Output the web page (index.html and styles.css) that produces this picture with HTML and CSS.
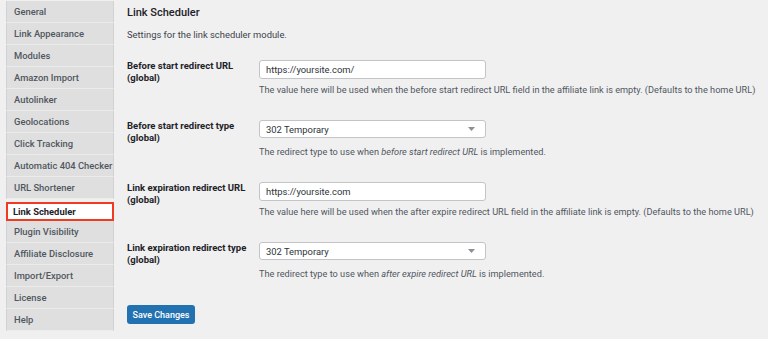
FILE: index.html
```html
<!DOCTYPE html>
<html lang="en">
<head>
    <meta charset="UTF-8">
    <meta name="viewport" content="width=device-width, initial-scale=1.0">
    <title>Link Scheduler Settings</title>
    <link rel="stylesheet" href="styles.css">
</head>
<body>
    <div class="settings-container">
        <ul class="sidebar">
            <li>General</li>
            <li>Link Appearance</li>
            <li>Modules</li>
            <li>Amazon Import</li>
            <li>Autolinker</li>
            <li>Geolocations</li>
            <li>Click Tracking</li>
            <li>Automatic 404 Checker</li>
            <li>URL Shortener</li>
            <li class="active">Link Scheduler</li>
            <li>Plugin Visibility</li>
            <li>Affiliate Disclosure</li>
            <li>Import/Export</li>
            <li>License</li>
            <li>Help</li>
        </ul>
        <div class="content">
            <h2>Link Scheduler</h2>
            <p class="intro">Settings for the link scheduler module.</p>
            <form class="settings-form">
                <label class="field-label" for="before-url">Before start redirect URL (global)</label>
                <div class="field">
                    <input type="text" id="before-url" class="text-input" value="https://yoursite.com/">
                    <p class="description">The value here will be used when the before start redirect URL field in the affiliate link is empty. (Defaults to the home URL)</p>
                </div>

                <label class="field-label">Before start redirect type (global)</label>
                <div class="field">
                    <div class="select-box">
                        <span>302 Temporary</span>
                        <svg width="7" height="4" viewBox="0 0 7 4"><path d="M0 0h7L3.5 4z" fill="#8c8f94"/></svg>
                    </div>
                    <p class="description">The redirect type to use when <em>before start redirect URL</em> is implemented.</p>
                </div>

                <label class="field-label" for="expire-url">Link expiration redirect URL (global)</label>
                <div class="field">
                    <input type="text" id="expire-url" class="text-input" value="https://yoursite.com">
                    <p class="description">The value here will be used when the after expire redirect URL field in the affiliate link is empty. (Defaults to the home URL)</p>
                </div>

                <label class="field-label">Link expiration redirect type (global)</label>
                <div class="field">
                    <div class="select-box">
                        <span>302 Temporary</span>
                        <svg width="7" height="4" viewBox="0 0 7 4"><path d="M0 0h7L3.5 4z" fill="#8c8f94"/></svg>
                    </div>
                    <p class="description">The redirect type to use when <em>after expire redirect URL</em> is implemented.</p>
                </div>
            </form>
            <button class="save-btn" type="button">Save Changes</button>
        </div>
    </div>
</body>
</html>
```

FILE: styles.css
```css
body {
    font-family: Roboto, "Liberation Sans", sans-serif;
    margin: 0;
    padding: 0;
    background-color: #f0f0f1;
    color: #1d2327;
}

.settings-container {
    display: flex;
    padding-left: 6px;
}

.sidebar {
    list-style-type: none;
    margin: 0;
    padding: 1px 0 0;
    width: 108px;
    align-self: flex-start;
}

.sidebar li {
    height: 21px;
    line-height: 21px;
    padding-left: 7px;
    font-size: 9.4px;
    font-weight: 500;
    color: #50575e;
    background-color: #dfdfe0;
    border-bottom: 1px solid #ebebec;
    border-left: 1px solid #d2d2d4;
    border-right: 1px solid #d2d2d4;
    white-space: nowrap;
}

.sidebar li.active {
    background-color: #fff;
    color: #1d2327;
    font-weight: 700;
    border: 2px solid #f03a22;
    height: 15px;
    line-height: 15px;
    margin-top: 3px;
    padding-left: 5px;
}

.content {
    margin-left: 13px;
    flex: 1;
}

.content h2 {
    font-size: 11px;
    font-weight: 500;
    margin: 5px 0 0;
    line-height: 15px;
}

.intro {
    font-size: 9.4px;
    color: #3c434a;
    margin: 9px 0 0;
    line-height: 11px;
}

.settings-form {
    display: grid;
    grid-template-columns: 132px 1fr;
    row-gap: 25px;
    margin-top: 20px;
}

.field-label {
    font-size: 9.5px;
    font-weight: 700;
    line-height: 11.5px;
    width: 126px;
}

.field p {
    margin: 0;
}

.text-input,
.select-box {
    display: block;
    box-sizing: border-box;
    width: 227px;
    height: 19px;
    margin: 0;
    padding: 0 6px;
    border: 1px solid #c3c4c7;
    border-radius: 3px;
    background-color: #fff;
    font-family: inherit;
    font-size: 9.4px;
    color: #2c3338;
}

.select-box {
    display: flex;
    align-items: center;
    justify-content: space-between;
    height: 18px;
    padding-right: 10px;
}

.field .description {
    font-size: 9.2px;
    color: #50575e;
    line-height: 11px;
    margin-top: 5px;
    white-space: nowrap;
}

.field .select-box + .description {
    margin-top: 8px;
}

.save-btn {
    display: block;
    margin-top: 26px;
    width: 68px;
    height: 19px;
    padding: 0;
    background-color: #2271b1;
    color: #fff;
    border: none;
    border-radius: 3px;
    font-family: inherit;
    font-size: 9px;
    font-weight: 500;
    cursor: pointer;
}
```
